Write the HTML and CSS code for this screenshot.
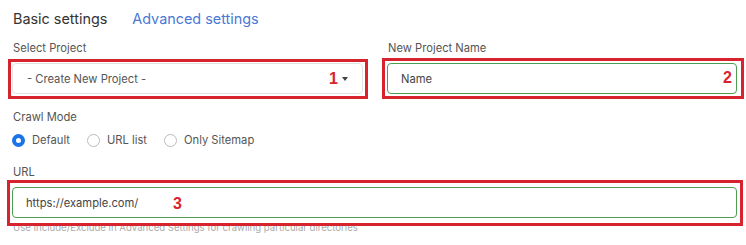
FILE: index.html
```html
<!DOCTYPE html>
<html lang="en">
<head>
  <meta charset="UTF-8">
  <meta name="viewport" content="width=device-width, initial-scale=1.0">
  <title>Crawl settings</title>
  <link rel="stylesheet" href="styles.css">
</head>
<body>

  <div class="container">
    <!-- tabs -->
    <div class="tabs">
      <span class="tab active">Basic settings</span>
      <span class="tab">Advanced settings</span>
    </div>

    <!-- project -->
    <div class="row">
      <div class="form-group">
        <label>Select Project</label>
        <div class="field">
          <div class="select">
            <span>- Create New Project -</span>
            <span class="caret"></span>
          </div>
          <div class="mark mark-1"></div>
          <span class="num num-1">1</span>
        </div>
      </div>
      <div class="form-group">
        <label for="projectName">New Project Name</label>
        <div class="field">
          <input type="text" id="projectName" class="input" value="Name">
          <div class="mark mark-2"></div>
          <span class="num num-2">2</span>
        </div>
      </div>
    </div>

    <!-- crawl mode -->
    <div class="form-group crawl-group">
      <label>Crawl Mode</label>
      <div class="radios">
        <span class="radio checked">Default</span>
        <span class="radio">URL list</span>
        <span class="radio">Only Sitemap</span>
      </div>
    </div>

    <!-- url -->
    <div class="form-group url-group">
      <label for="url">URL</label>
      <div class="field">
        <input type="text" id="url" class="input" value="https://example.com/">
        <div class="mark mark-3"></div>
        <span class="num num-3">3</span>
      </div>
      <p class="hint">Use Include/Exclude in Advanced Settings for crawling particular directories</p>
    </div>
  </div>

</body>
</html>
```

FILE: styles.css
```css
body {
  font-family: Inter, "Noto Sans", sans-serif;
  margin: 0;
  padding: 0;
  background-color: #fff;
  color: #444;
}
.container {
  padding: 9px 9px 0 12px;
}
.tabs {
  display: flex;
  gap: 25px;
  padding-left: 1px;
  height: 31px;
}
.tab {
  font-size: 14.4px;
  line-height: 20px;
  color: #4a78d6;
}
.tab.active {
  color: #333;
}
.row {
  display: grid;
  grid-template-columns: 351px 350px;
  gap: 24px;
}
.form-group label {
  display: block;
  font-size: 11.2px;
  line-height: 16px;
  color: #555;
  padding-left: 1px;
  margin-bottom: 7px;
}
.field {
  position: relative;
}
.select, .input {
  box-sizing: border-box;
  width: 100%;
  height: 31px;
  border-radius: 4px;
  background: #fff;
  font-family: Inter, "Noto Sans", sans-serif;
  font-size: 11.2px;
  color: #444;
}
.select {
  display: flex;
  align-items: center;
  justify-content: space-between;
  padding: 0 14px 0 14px;
  border: 1px solid #e2e2e2;
  color: #555;
}
.caret {
  width: 0;
  height: 0;
  border-left: 3.5px solid transparent;
  border-right: 3.5px solid transparent;
  border-top: 4px solid #444;
}
.input {
  display: block;
  padding: 0 13px;
  border: 1px solid #4e9e52;
  outline: none;
}
.mark {
  position: absolute;
  border: 3px solid #d7232d;
  pointer-events: none;
}
.mark-1 { top: -4px; left: -4px; right: -5px; bottom: -5px; }
.mark-2 { top: -5px; left: -5px; right: -7px; bottom: -5px; }
.mark-3 { top: -7px; left: -5px; right: -6px; bottom: -8px; }
.num {
  position: absolute;
  font-family: "Liberation Sans", Arial, sans-serif;
  font-weight: bold;
  font-size: 16px;
  line-height: 16px;
  color: #d7232d;
}
.num-1 { top: 8px; right: 25px; }
.num-2 { top: 7px; right: 5px; }
.num-3 { top: 9px; left: 161px; }
.crawl-group {
  margin-top: 15px;
}
.radios {
  display: flex;
  gap: 17px;
  height: 16px;
  align-items: center;
}
.radio {
  display: flex;
  align-items: center;
  gap: 7px;
  font-size: 11.2px;
  color: #555;
}
.radio::before {
  content: "";
  box-sizing: border-box;
  width: 13px;
  height: 13px;
  border-radius: 50%;
  border: 1px solid #bbb;
  background: #fff;
}
.radio.checked::before {
  border: 4px solid #1a73e8;
}
.url-group {
  margin-top: 16px;
}
.hint {
  margin: 4px 0 0 1px;
  font-size: 9.6px;
  line-height: 12px;
  color: #aaa;
}
```
